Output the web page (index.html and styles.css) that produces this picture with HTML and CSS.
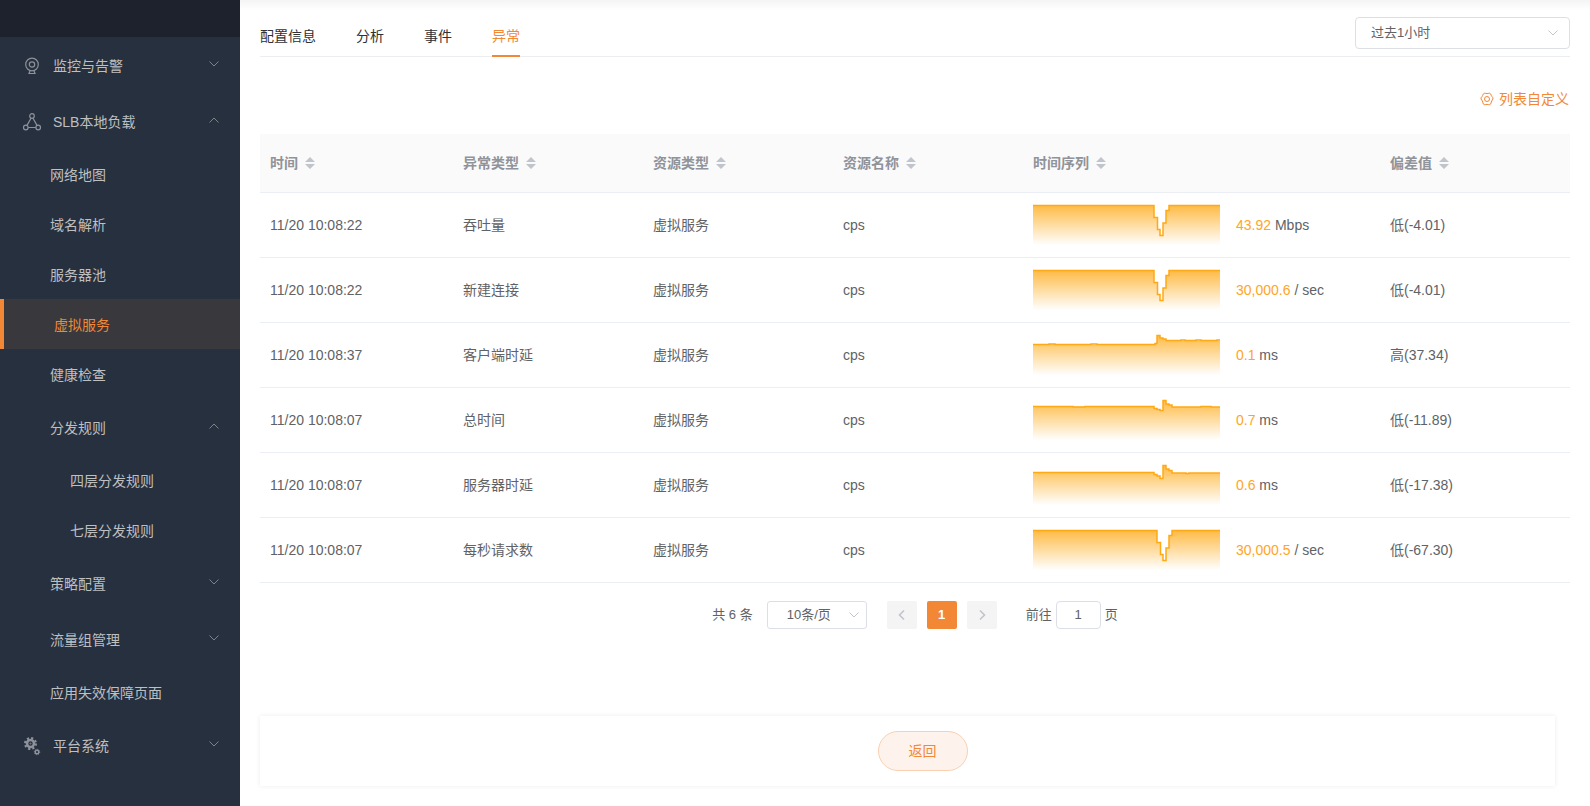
FILE: index.html
```
<!DOCTYPE html>
<html lang="zh-CN">
<head>
<meta charset="utf-8">
<title>虚拟服务 - 异常</title>
<link rel="stylesheet" href="styles.css">
</head>
<body>
<svg class="defs" aria-hidden="true">
  <defs>
    <linearGradient id="fade" gradientUnits="userSpaceOnUse" x1="0" y1="0" x2="0" y2="40">
      <stop offset="0" stop-color="#ffa915" stop-opacity=".8"/>
      <stop offset="1" stop-color="#ffa915" stop-opacity="0"/>
    </linearGradient>
    <symbol id="down" viewBox="0 0 12 12"><path d="M1.5 3.5 6 8l4.5-4.5" fill="none" stroke="currentColor"/></symbol>
    <symbol id="up" viewBox="0 0 12 12"><path d="M1.5 8.500 6 4l4.500 4.500" fill="none" stroke="currentColor"/></symbol>
    <symbol id="sort" viewBox="0 0 10 12"><path d="M5 0l5 5H0zM0 7h10l-5 5z" fill="currentColor"/></symbol>
  </defs>
</svg>
<div class="app">
  <aside class="sidebar">
    <div class="brand"></div>
    <nav class="menu">
      <button class="item tall top"><svg class="icon" viewBox="0 0 18 18"><circle cx="9" cy="7.500" r="6.300"/><circle cx="9" cy="7.500" r="2.700"/><path d="M7 14l-1 2.500h6L11 14"/></svg><span>监控与告警</span><svg class="chev"><use href="#down"/></svg></button>
      <button class="item tall top"><svg class="icon" viewBox="0 0 18 18"><circle cx="9" cy="3" r="2.300"/><circle cx="2.800" cy="14.500" r="2.300"/><circle cx="15.200" cy="14.500" r="2.300"/><path d="M8 5.200 4 12.400M10 5.200l4 7.200M5.200 14.500h7.600"/></svg><span>SLB本地负载</span><svg class="chev"><use href="#up"/></svg></button>
      <a class="item" href="#">网络地图</a>
      <a class="item" href="#">域名解析</a>
      <a class="item" href="#">服务器池</a>
      <a class="item active" href="#">虚拟服务</a>
      <a class="item" href="#">健康检查</a>
      <button class="item tall"><span>分发规则</span><svg class="chev"><use href="#up"/></svg></button>
      <a class="item sub" href="#">四层分发规则</a>
      <a class="item sub" href="#">七层分发规则</a>
      <button class="item tall"><span>策略配置</span><svg class="chev"><use href="#down"/></svg></button>
      <button class="item tall"><span>流量组管理</span><svg class="chev"><use href="#down"/></svg></button>
      <a class="item" href="#">应用失效保障页面</a>
      <button class="item tall top"><svg class="icon" viewBox="0 0 18 18"><circle cx="7.500" cy="6.500" r="3.500" stroke-width="2.600"/><circle cx="7.500" cy="6.500" r="5.500" stroke-width="2" stroke-dasharray="2.200 2.120"/><circle cx="7.500" cy="6.500" r=".6" stroke-width=".8"/><circle cx="14" cy="15" r="1.800" stroke-width="1.400"/><circle cx="14" cy="15" r="2.700" stroke-width="1" stroke-dasharray="1.100 1.020"/></svg><span>平台系统</span><svg class="chev"><use href="#down"/></svg></button>
    </nav>
  </aside>
  <main class="main">
    <header class="bar">
      <nav class="tabs">
        <a href="#">配置信息</a><a href="#">分析</a><a href="#">事件</a><a class="on" href="#">异常</a>
      </nav>
      <div class="select range"><select aria-label="时间范围"><option>过去1小时</option></select><svg class="arrow"><use href="#down"/></svg></div>
    </header>
    <div class="tools">
      <button class="custom"><svg viewBox="0 0 14 14"><path d="M3.300 2Q4 .8 5.200 1.300q1.800.7 3.600 0Q10 .8 10.700 2l.6 1.400q.3 1 1.200 1.700.8.800.4 1.900-.4 1.100-1.200 1.900L10.700 12q-.7 1.200-1.900.7-1.800-.7-3.600 0Q4 13.200 3.300 12l-.9-3.100Q1.500 8.100 1.100 7q-.4-1.100.4-1.900.9-.7 1.200-1.700z"/><circle cx="7" cy="7" r="2.500"/></svg>列表自定义</button>
    </div>
    <table class="grid">
      <colgroup><col class="c-time"><col class="c-std"><col class="c-std"><col class="c-std"><col class="c-series"><col class="c-std"></colgroup>
      <thead>
        <tr>
          <th>时间<svg class="sort"><use href="#sort"/></svg></th>
          <th>异常类型<svg class="sort"><use href="#sort"/></svg></th>
          <th>资源类型<svg class="sort"><use href="#sort"/></svg></th>
          <th>资源名称<svg class="sort"><use href="#sort"/></svg></th>
          <th>时间序列<svg class="sort"><use href="#sort"/></svg></th>
          <th>偏差值<svg class="sort"><use href="#sort"/></svg></th>
        </tr>
      </thead>
      <tbody>
        <tr><td>11/20 10:08:22</td><td>吞吐量</td><td>虚拟服务</td><td>cps</td>
          <td><div class="series"><svg class="spark" viewBox="0 0 187 40"><path class="area" d="M0 .5H121V12.500H124.500V24.500H127V30.500H130V18H133V5.500H136V.5H187V40H0z"/><path class="line" d="M0 .5H121V12.500H124.500V24.500H127V30.500H130V18H133V5.500H136V.5H187"/></svg><span><b>43.92</b> Mbps</span></div></td><td>低(-4.01)</td></tr>
        <tr><td>11/20 10:08:22</td><td>新建连接</td><td>虚拟服务</td><td>cps</td>
          <td><div class="series"><svg class="spark" viewBox="0 0 187 40"><path class="area" d="M0 .5H121V12.500H124.500V24.500H127V30.500H130V18H133V5.500H136V.5H187V40H0z"/><path class="line" d="M0 .5H121V12.500H124.500V24.500H127V30.500H130V18H133V5.500H136V.5H187"/></svg><span><b>30,000.6</b> / sec</span></div></td><td>低(-4.01)</td></tr>
        <tr><td>11/20 10:08:37</td><td>客户端时延</td><td>虚拟服务</td><td>cps</td>
          <td><div class="series"><svg class="spark" viewBox="0 0 187 40"><path class="area" d="M0 9.500H16V9H22V9.500H122V8.500H124V.5H127V3H130V4H133V5.500H187V40H0z"/><path class="line" d="M0 9.500H16V9H22V9.500H58V9H64V9.500H122V8.500H124V.5H127V3H130V4H133V5.500H148V5H152V5.500H163V5H168V5.500H184V5H187"/></svg><span><b>0.1</b> ms</span></div></td><td>高(37.34)</td></tr>
        <tr><td>11/20 10:08:07</td><td>总时间</td><td>虚拟服务</td><td>cps</td>
          <td><div class="series"><svg class="spark" viewBox="0 0 187 40"><path class="area" d="M0 6.500H121V8.500H124V9.500H127V10.500H130V.5H133V4H136V5H139V7H187V40H0z"/><path class="line" d="M0 6.500H40V7H52V6.500H121V8.500H124V9.500H127V10.500H130V.5H133V4H136V5H139V7H168V6.500H178V7H187"/></svg><span><b>0.7</b> ms</span></div></td><td>低(-11.89)</td></tr>
        <tr><td>11/20 10:08:07</td><td>服务器时延</td><td>虚拟服务</td><td>cps</td>
          <td><div class="series"><svg class="spark" viewBox="0 0 187 40"><path class="area" d="M0 7.500H121V9.500H124V11H127V13.500H130V.5H133V4H136V5.500H139V8H187V40H0z"/><path class="line" d="M0 7.500H121V9.500H124V11H127V13.500H130V.5H133V4H136V5.500H139V8H153V8.500H156V8H187"/></svg><span><b>0.6</b> ms</span></div></td><td>低(-17.38)</td></tr>
        <tr><td>11/20 10:08:07</td><td>每秒请求数</td><td>虚拟服务</td><td>cps</td>
          <td><div class="series"><svg class="spark" viewBox="0 0 187 40"><path class="area" d="M0 .5H124V12.500H127.500V24.500H130V30.500H133V18H136V5.500H139V.5H187V40H0z"/><path class="line" d="M0 .5H124V12.500H127.500V24.500H130V30.500H133V18H136V5.500H139V.5H187"/></svg><span><b>30,000.5</b> / sec</span></div></td><td>低(-67.30)</td></tr>
      </tbody>
    </table>
    <div class="pager">
      <span class="total">共 6 条</span>
      <div class="select size"><select aria-label="每页条数"><option>10条/页</option></select><svg class="arrow"><use href="#down"/></svg></div>
      <div class="pages">
        <button disabled aria-label="上一页"><svg viewBox="0 0 12 12"><path d="M8 1.500 3.500 6 8 10.500"/></svg></button>
        <button class="current">1</button>
        <button disabled aria-label="下一页"><svg viewBox="0 0 12 12"><path d="M4 1.500 8.500 6 4 10.500"/></svg></button>
      </div>
      <label class="jump">前往<input type="text" value="1">页</label>
    </div>
    <footer class="foot"><button class="back">返回</button></footer>
  </main>
</div>
</body>
</html>
```
FILE: styles.css
```
* { box-sizing: border-box; }
body {
  margin: 0;
  font: 14px/20px "Liberation Sans", "Noto Sans CJK SC", sans-serif;
  color: #606266;
  background: #fff;
}
button, input, select { font: inherit; color: inherit; margin: 0; }
button { border: 0; background: none; padding: 0; cursor: pointer; }
a { color: inherit; text-decoration: none; }
.defs { position: absolute; width: 0; height: 0; }

.app { display: flex; min-height: 100vh; }
.sidebar { flex: none; width: 240px; background: #27303f; color: #c0c4cc; }
.brand { height: 37px; background: #1d222d; }
.menu { display: flex; flex-direction: column; }
.item {
  display: flex;
  align-items: center;
  height: 50px;
  padding: 2px 20px 0 50px;
  text-align: left;
  color: #bfbfbf;
}
.tall { height: 56px; }
.item.top { padding-left: 23px; }
.item.sub { padding-left: 70px; }
.active { border-left: 4px solid #f28835; background: #38383d; color: #f28835; }
.icon {
  width: 18px;
  height: 18px;
  margin-right: 12px;
  fill: none;
  stroke: #8d929b;
  stroke-width: 1.2;
  overflow: visible;
}
.chev { width: 12px; height: 12px; margin: 0 0 4px auto; color: #7d828b; }

.main {
  flex: 1;
  min-width: 0;
  padding: 0 20px 20px;
  display: flex;
  flex-direction: column;
  background: linear-gradient(#f4f4f4, #fff 10px);
}
.bar {
  display: flex;
  justify-content: space-between;
  height: 57px;
  border-bottom: 1px solid #ebedf0;
}
.tabs { display: flex; gap: 40px; color: #303133; }
.tabs a { height: 57px; padding-top: 26px; }
.tabs .on { color: #f28835; border-bottom: 2px solid #f28835; }
.select { position: relative; background: #fff; font-size: 13px; }
.select select {
  appearance: none;
  width: 100%;
  height: 100%;
  border: 1px solid #dcdfe6;
  border-radius: 4px;
  background: none;
  padding: 0 15px;
}
.arrow {
  position: absolute;
  right: 11px;
  top: 50%;
  width: 12px;
  height: 12px;
  margin-top: -6px;
  color: #c0c4cc;
  pointer-events: none;
}
.range { width: 215px; height: 32px; margin-top: 17px; }

.tools { display: flex; justify-content: flex-end; padding: 32px 1px 25px; }
.custom { display: flex; align-items: center; gap: 5px; color: #f28835; }
.custom svg { width: 14px; height: 14px; fill: none; stroke: #f28835; }

.grid { width: 100%; table-layout: fixed; border-collapse: collapse; }
.c-time { width: 193px; }
.c-std { width: 190px; }
.c-series { width: 357px; }
.grid th, .grid td { padding: 0 10px; text-align: left; border-bottom: 1px solid #ebeef5; }
.grid th { height: 58px; background: #fafafa; color: #909399; font-weight: 700; }
.grid td { height: 65px; }
.sort { width: 10px; height: 12px; margin-left: 7px; vertical-align: -1px; color: #c0c4cc; }
.series { display: flex; align-items: center; gap: 16px; }
.series b { font-weight: 400; color: #ffa51f; }
.spark { width: 187px; height: 40px; overflow: visible; }
.area { fill: url(#fade); }
.line { fill: none; stroke: #ffa915; stroke-width: 1.5; }

.pager {
  display: flex;
  justify-content: center;
  align-items: center;
  padding: 18px 0 0;
  font-size: 13px;
}
.size { width: 100px; height: 28px; margin: 0 20px 0 14px; }
.size select { border-radius: 3px; padding: 0 19px; }
.size .arrow { right: 7px; color: #c0c4cc; }
.pages { display: flex; gap: 10px; }
.pages button {
  display: grid;
  place-items: center;
  width: 30px;
  height: 28px;
  border-radius: 2px;
  background: #f4f4f5;
  font-weight: 700;
}
.pages .current { background: #f28835; color: #fff; }
.pages svg { width: 12px; height: 12px; fill: none; stroke: #c0c4cc; stroke-width: 1.6; }
.jump { display: flex; align-items: center; gap: 4px; margin-left: 29px; }
.jump input {
  width: 45px;
  height: 28px;
  border: 1px solid #dcdfe6;
  border-radius: 4px;
  text-align: center;
}

.foot {
  display: flex;
  justify-content: center;
  margin: 87px 15px 0 0;
  padding: 15px 0 15px 30px;
  background: #fff;
  box-shadow: 0 0 5px rgba(0, 0, 0, .08);
}
.back {
  width: 90px;
  height: 40px;
  border: 1px solid #fad0b0;
  border-radius: 20px;
  background: #fef3ec;
  color: #f28835;
}
```
